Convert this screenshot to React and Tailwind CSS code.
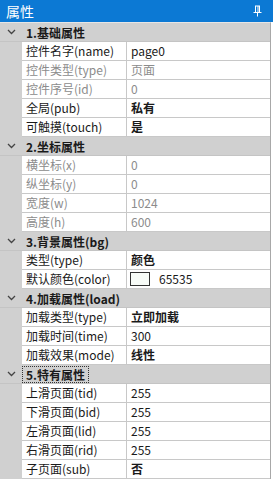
import React from 'react';

const sections = [
    {
        title: '1.基础属性',
        rows: [
            { name: '控件名字(name)', value: 'page0' },
            { name: '控件类型(type)', value: '页面', dim: true },
            { name: '控件序号(id)', value: '0', dim: true },
            { name: '全局(pub)', value: '私有', bold: true },
            { name: '可触摸(touch)', value: '是', bold: true },
        ],
    },
    {
        title: '2.坐标属性',
        rows: [
            { name: '横坐标(x)', value: '0', dim: true },
            { name: '纵坐标(y)', value: '0', dim: true },
            { name: '宽度(w)', value: '1024', dim: true },
            { name: '高度(h)', value: '600', dim: true },
        ],
    },
    {
        title: '3.背景属性(bg)',
        rows: [
            { name: '类型(type)', value: '颜色', bold: true },
            { name: '默认颜色(color)', value: '65535', swatch: true },
        ],
    },
    {
        title: '4.加载属性(load)',
        rows: [
            { name: '加载类型(type)', value: '立即加载', bold: true },
            { name: '加载时间(time)', value: '300' },
            { name: '加载效果(mode)', value: '线性', bold: true },
        ],
    },
    {
        title: '5.特有属性',
        focused: true,
        rows: [
            { name: '上滑页面(tid)', value: '255' },
            { name: '下滑页面(bid)', value: '255' },
            { name: '左滑页面(lid)', value: '255' },
            { name: '右滑页面(rid)', value: '255' },
            { name: '子页面(sub)', value: '否', bold: true },
        ],
    },
];

function Chevron() {
    return (
        <svg width="9" height="6" viewBox="0 0 9 6" fill="none">
            <path d="M1 1 L4.5 4.5 L8 1" stroke="#444" strokeWidth="1.3" />
        </svg>
    );
}

function Pin() {
    return (
        <svg width="9" height="12" viewBox="0 0 9 12" fill="none">
            <path d="M2.5 1 V7 M6.5 1 V7 M2 1 H7 M0.5 7.5 H8.5 M4.5 7.5 V11.5 M5 1 V7" stroke="#fff" strokeWidth="1" />
        </svg>
    );
}

export default function App() {
    return (
        <div className="w-[273px] h-[491px] bg-white overflow-hidden text-[12px] text-[#1a1a1a] font-['Noto_Sans_CJK_SC',sans-serif]">
            <div className="h-[22px] bg-[#0c79d4] flex items-center justify-between pl-[6px] pr-[11px] text-white text-[14px] leading-none">
                <span>属性</span>
                <Pin />
            </div>
            <div className="border-t border-[#e6e6e6] border-r border-r-[#a8a8a8] mr-[2px]">
                {sections.map((s) => (
                    <div key={s.title}>
                        <div className="h-[19px] bg-[#d0d0d0] flex items-center border-b border-[#c4c4c4]">
                            <div className="w-[22px] flex justify-center pl-[1px]">
                                <Chevron />
                            </div>
                            <span
                                className={`font-bold leading-[15px] px-[3px] ml-[1px] ${s.focused ? 'outline outline-1 outline-dotted outline-[#333]' : ''}`}
                            >
                                {s.title}
                            </span>
                        </div>
                        {s.rows.map((r) => (
                            <div key={r.name} className="h-[19px] flex">
                                <div className="w-[22px] bg-[#d0d0d0] shrink-0" />
                                <div
                                    className={`w-[105px] shrink-0 border-r border-b border-[#c8c8c8] pl-[4px] flex items-center whitespace-nowrap leading-none ${r.dim ? 'text-[#8c8c8c]' : ''}`}
                                >
                                    {r.name}
                                </div>
                                <div
                                    className={`flex-1 border-b border-[#c8c8c8] pl-[4px] flex items-center whitespace-nowrap leading-none ${r.dim ? 'text-[#8c8c8c]' : ''} ${r.bold ? 'font-bold' : ''}`}
                                >
                                    {r.swatch && (
                                        <span className="w-[20px] h-[14px] border border-[#333] bg-[#f8fcf8] mr-[9px] ml-[-1px]" />
                                    )}
                                    {r.value}
                                </div>
                            </div>
                        ))}
                    </div>
                ))}
            </div>
        </div>
    );
}
